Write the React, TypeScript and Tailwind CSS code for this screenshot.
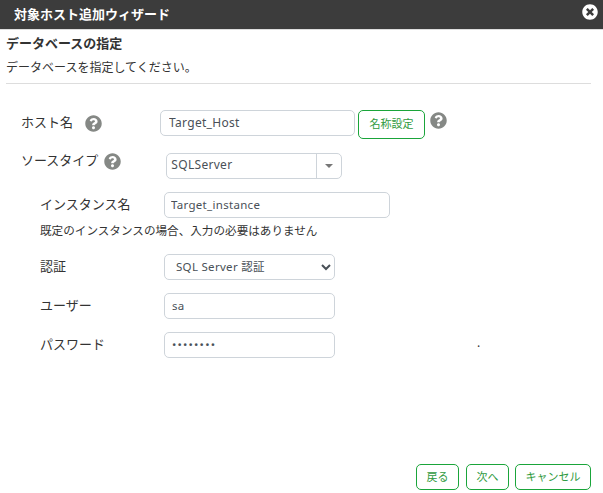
import { FaQuestionCircle, FaTimesCircle } from "react-icons/fa";

const fontCls = "font-['Noto_Sans','Noto_Sans_CJK_JP',sans-serif]";
const inputCls =
  "block h-[26px] rounded-[5px] border border-[#ced4da] bg-white pb-[2px] text-[11.5px] text-[#495057] tracking-[0.3px] outline-none";

function Help({ className }: { className: string }) {
  return <FaQuestionCircle className={`text-[#858885] ${className}`} size={17} />;
}

function GreenButton({ label, className }: { label: string; className: string }) {
  return (
    <button className={`rounded-[5px] border border-[#1aa53a] bg-white text-[11px] text-[#2f9a40] ${className}`}>
      {label}
    </button>
  );
}

export default function App() {
  return (
    <div className={`flex h-[493px] w-[603px] flex-col overflow-hidden bg-white text-[#333] ${fontCls}`}>
      <div className="flex h-[30px] shrink-0 items-start justify-between border-b border-[#ddd] bg-[#3c3c3c] pl-[14px] pr-[5px]">
        <span className="mt-[5px] text-[13px] leading-[19px] font-bold text-white">対象ホスト追加ウィザード</span>
        <FaTimesCircle className="mt-[4px] text-white" size={16} />
      </div>

      <div className="mx-[6px] mr-[12px] border-b border-[#ddd] pt-[4px] pb-[6px]">
        <h1 className="text-[13px] leading-[18px] font-bold">データベースの指定</h1>
        <p className="mt-[7px] text-[12px] leading-[18px]">データベースを指定してください。</p>
      </div>

      <div className="mt-[26px] flex items-start pl-[21px]">
        <span className="mt-[3px] text-[13px] leading-[19px]">ホスト名</span>
        <Help className="mt-[5px] ml-[12px]" />
        <input readOnly defaultValue="Target_Host" className={`${inputCls} ml-[58px] w-[195px] px-[8px] text-[12px]`} />
        <GreenButton label="名称設定" className="ml-[3px] h-[29px] w-[67px]" />
        <Help className="ml-[5px] mt-[2px]" />
      </div>

      <div className="mt-[14px] flex items-start pl-[21px]">
        <span className="mt-[-2px] text-[13px] leading-[19px]">ソースタイプ</span>
        <Help className="ml-[6px]" />
        <div className={`${inputCls} ml-[45px] flex w-[176px] items-stretch !pb-0`}>
          <span className="flex-1 pl-[4px] text-[12px] leading-[22px]">SQLServer</span>
          <span className="flex w-[25px] items-center justify-center border-l border-[#ced4da]">
            <span className="h-0 w-0 border-x-[4px] border-t-[4px] border-x-transparent border-t-[#777]" />
          </span>
        </div>
      </div>

      <div className="mt-[13px] flex items-center pl-[40px]">
        <span className="w-[124px] text-[13px]">インスタンス名</span>
        <input readOnly defaultValue="Target_instance" className={`${inputCls} w-[226px] px-[6px]`} />
      </div>
      <p className="mt-[4px] pl-[40px] text-[11.6px] leading-[18px]">既定のインスタンスの場合、入力の必要はありません</p>

      <div className="mt-[14px] flex items-center pl-[40px]">
        <span className="w-[124px] text-[13px]">認証</span>
        <select className={`${inputCls} w-[171px] pl-[7px]`} defaultValue="sql">
          <option value="sql">SQL Server 認証</option>
        </select>
      </div>

      <div className="mt-[13px] flex items-center pl-[40px]">
        <span className="w-[124px] text-[13px]">ユーザー</span>
        <input readOnly defaultValue="sa" className={`${inputCls} w-[171px] px-[7px]`} />
      </div>

      <div className="mt-[13px] flex items-center pl-[40px]">
        <span className="w-[124px] text-[13px]">パスワード</span>
        <input
          readOnly
          type="password"
          defaultValue="password"
          className={`${inputCls} w-[171px] px-[7px] text-[10px] tracking-[1.2px]`}
        />
        <span className="mb-[4px] ml-[142px] text-[12px]">.</span>
      </div>

      <div className="mt-auto flex justify-end pr-[12px] pb-[3px]">
        <GreenButton label="戻る" className="h-[26px] w-[43px]" />
        <GreenButton label="次へ" className="ml-[7px] h-[26px] w-[43px]" />
        <GreenButton label="キャンセル" className="ml-[6px] h-[26px] w-[76px]" />
      </div>
    </div>
  );
}
